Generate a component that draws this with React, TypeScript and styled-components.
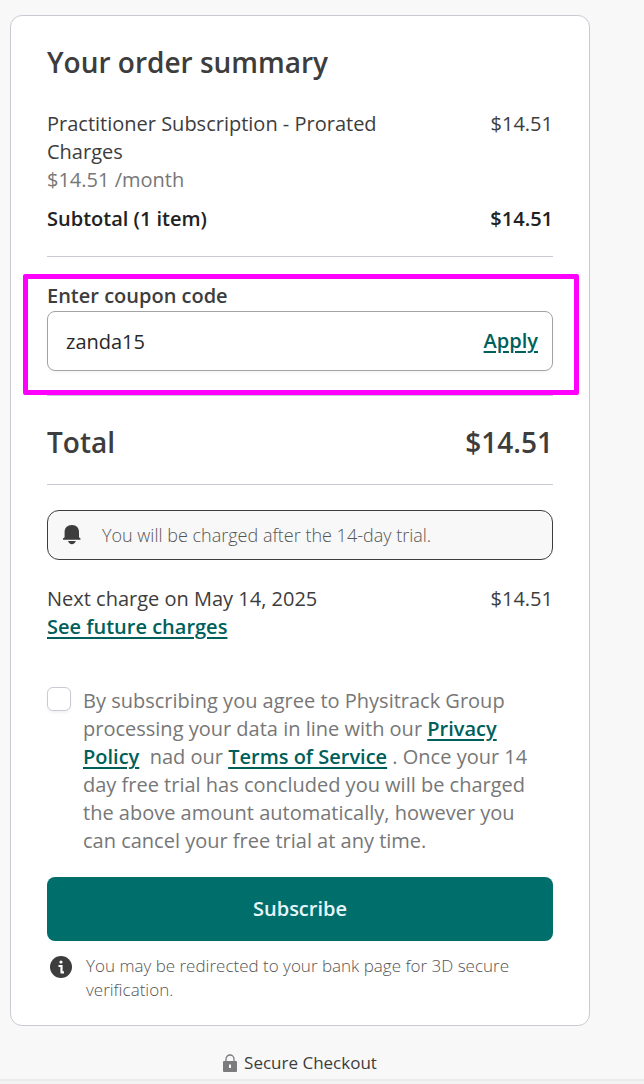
import React from "react";
import styled, { createGlobalStyle } from "styled-components";

const GlobalStyle = createGlobalStyle`
  *, *::before, *::after { box-sizing: border-box; }
  body {
    margin: 0;
    background: #f8f8f8;
    color: #3d3d3d;
    font-family: "Open Sans", "Noto Sans", sans-serif;
    font-size: 20px;
    line-height: 28px;
  }
  h1, p { margin: 0; }
  button, input { font: inherit; }
`;

const Page = styled.main`
  padding: 15px 54px 0 10px;
`;

const Card = styled.form`
  padding: 28px 36px 23px;
  background: #fff;
  border: 1px solid #c9cad3;
  border-radius: 12px;
`;

const Title = styled.h1`
  font-size: 28px;
  line-height: 36px;
  font-weight: 600;
`;

const Row = styled.div<{ $top?: number }>`
  display: flex;
  justify-content: space-between;
  gap: 24px;
  margin-top: ${({ $top = 0 }) => $top}px;
`;

const ItemName = styled.div`
  max-width: 360px;
`;

const Muted = styled.p`
  color: #777;
`;

const Subtotal = styled(Row)`
  margin-bottom: 23px;
  color: #222;
  font-weight: 600;
`;

const TotalRow = styled(Row)`
  padding: 28px 0 24px;
  font-size: 28px;
  line-height: 36px;
  font-weight: 600;
`;

const Divider = styled.hr`
  height: 1px;
  margin: 0;
  border: 0;
  background: #c9cad3;
`;

const Coupon = styled.section`
  position: relative;
  padding: 25px 0 24px;
`;

const Highlight = styled.div`
  position: absolute;
  inset: 17px -26px 0 -24px;
  border: 5px solid #ff00ff;
  border-radius: 2px;
  pointer-events: none;
`;

const CouponLabel = styled.label`
  display: block;
  margin-bottom: 1px;
  font-weight: 600;
`;

const CouponField = styled.div`
  display: flex;
  align-items: center;
  height: 60px;
  padding: 0 14px 0 18px;
  border: 1px solid #a3a3a3;
  border-radius: 8px;
  box-shadow: 0 2px 3px #0000000a;
`;

const CouponInput = styled.input`
  flex: 1;
  min-width: 0;
  padding: 2px 0 0;
  border: 0;
  outline: 0;
  background: transparent;
  color: #282828;
`;

const LinkButton = styled.button`
  padding: 0;
  border: 0;
  background: none;
  color: #005f5b;
  font-weight: 600;
  text-decoration: underline;
  text-decoration-thickness: 2px;
  text-underline-offset: 3px;
  cursor: pointer;
`;

const TextLink = styled.a`
  color: #005f5b;
  font-weight: 600;
  text-decoration-thickness: 2px;
  text-underline-offset: 3px;
`;

const Notice = styled.div`
  display: flex;
  align-items: center;
  gap: 20px;
  height: 50px;
  margin: 25px 0;
  padding: 0 14px;
  border: 1px solid #3d3d3d;
  border-radius: 12px;
  background: #f8f8f8;
  color: #555;
  font-size: 18px;
  line-height: 24px;
  font-weight: 300;
`;

const Consent = styled.div`
  display: flex;
  align-items: flex-start;
  gap: 12px;
  margin-top: 46px;
  padding-right: 16px;
  color: #777;
`;

const Checkbox = styled.input`
  flex: none;
  appearance: none;
  width: 24px;
  height: 24px;
  margin: 0;
  border: 1px solid #c9cad3;
  border-radius: 6px;
  background: #fff;
  box-shadow: 0 2px 3px #0000000d;
`;

const SubscribeButton = styled.button`
  display: block;
  width: 100%;
  height: 64px;
  margin: 22px 0 13px;
  border: 0;
  border-radius: 8px;
  background: #006f6c;
  color: #e6f6fb;
  font-weight: 600;
  cursor: pointer;
`;

const Footnote = styled.div`
  display: flex;
  align-items: flex-start;
  gap: 13px;
  padding-left: 2px;
  color: #555;
  font-size: 17px;
  line-height: 24px;
  font-weight: 300;
`;

const Icon = styled.svg`
  flex: none;
  display: block;
`;

const Secure = styled.footer`
  display: flex;
  align-items: center;
  justify-content: center;
  gap: 7px;
  padding: 25px 0 4px;
  font-size: 17px;
  line-height: 24px;
`;

const BottomBar = styled.div`
  height: 5px;
  border-top: 2px solid #ebebeb;
  background: #f3f3f3;
`;

const BellIcon = () => (
  <Icon width="20" height="22" viewBox="0 0 20 22" fill="#3d3d3d" aria-hidden="true">
    <path d="M10 1C5.300 1 2.600 4 2.600 8v5.200L1 14.600v1.200h17.500v-1.200L17 13.200V8C17 4 14.600 1 10 1Z" />
    <path d="M6 17h7.800c-.6 1.900-2 3.200-3.900 3.200S6.600 18.900 6 17Z" />
  </Icon>
);

const InfoIcon = () => (
  <Icon width="24" height="24" viewBox="0 0 24 24" aria-hidden="true">
    <circle cx="12" cy="13" r="11" fill="#3d3d3d" />
    <circle cx="12" cy="8" r="1.600" fill="#fff" />
    <path d="M9.500 12h3v6M11.500 18.300h3.500" fill="none" stroke="#fff" strokeWidth="2.200" />
  </Icon>
);

const LockIcon = () => (
  <Icon width="14" height="18" viewBox="0 0 14 18" aria-hidden="true">
    <path d="M3 8V5a4 4 0 0 1 8 0v3" fill="none" stroke="#7b7b7e" strokeWidth="1.300" />
    <rect y="7" width="14" height="11" rx="1" fill="#7b7b7e" />
    <path d="M6 10.500h2V14H6z" fill="#f8f8f8" />
  </Icon>
);

export default function App() {
  return (
    <>
      <GlobalStyle />
      <Page>
        <Card onSubmit={(event) => event.preventDefault()}>
          <Title>Your order summary</Title>
          <Row $top={30}>
            <ItemName>
              <p>Practitioner Subscription - Prorated Charges</p>
              <Muted>$14.51 /month</Muted>
            </ItemName>
            <span>$14.51</span>
          </Row>
          <Subtotal $top={11}>
            <span>Subtotal (1 item)</span>
            <span>$14.51</span>
          </Subtotal>
          <Divider />
          <Coupon>
            <CouponLabel htmlFor="coupon">Enter coupon code</CouponLabel>
            <CouponField>
              <CouponInput id="coupon" type="text" defaultValue="zanda15" />
              <LinkButton type="button">Apply</LinkButton>
            </CouponField>
            <Highlight />
          </Coupon>
          <Divider />
          <TotalRow>
            <span>Total</span>
            <span>$14.51</span>
          </TotalRow>
          <Divider />
          <Notice>
            <BellIcon />
            <span>You will be charged after the 14-day trial.</span>
          </Notice>
          <Row>
            <span>Next charge on May 14, 2025</span>
            <span>$14.51</span>
          </Row>
          <TextLink href="#future-charges">See future charges</TextLink>
          <Consent>
            <Checkbox type="checkbox" id="consent" />
            <label htmlFor="consent">
              By subscribing you agree to Physitrack Group processing your data in line with our{" "}
              <TextLink href="#privacy">Privacy Policy</TextLink>
              {" \u00a0"}nad our <TextLink href="#terms">Terms of Service</TextLink> . Once your 14
              day free trial has concluded you will be charged the above amount automatically,
              however you can cancel your free trial at any time.
            </label>
          </Consent>
          <SubscribeButton type="submit">Subscribe</SubscribeButton>
          <Footnote>
            <InfoIcon />
            <p>You may be redirected to your bank page for 3D secure verification.</p>
          </Footnote>
        </Card>
        <Secure>
          <LockIcon />
          <span>Secure Checkout</span>
        </Secure>
      </Page>
      <BottomBar />
    </>
  );
}
